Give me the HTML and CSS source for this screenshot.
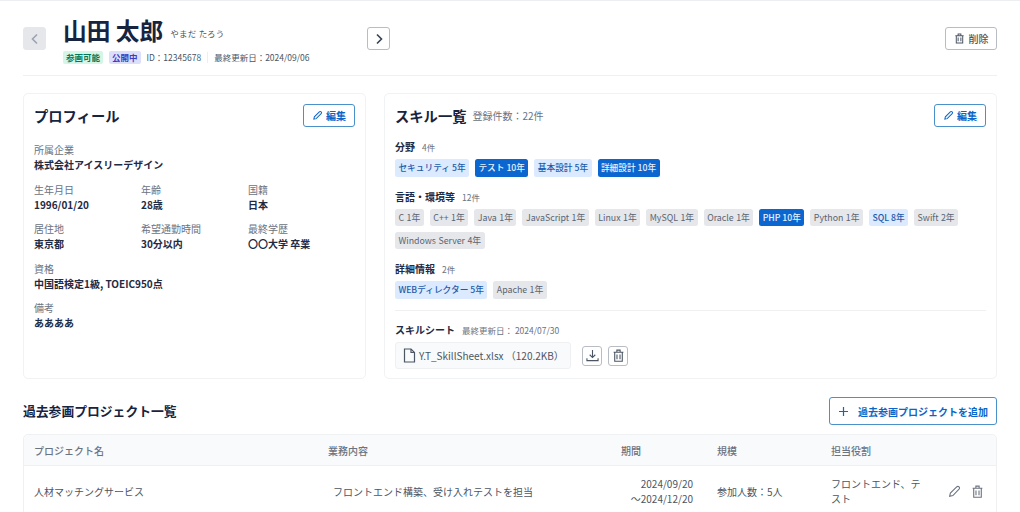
FILE: index.html
```html
<!DOCTYPE html>
<html lang="ja">
<head>
<meta charset="utf-8">
<title>山田 太郎</title>
<link rel="stylesheet" href="styles.css">
</head>
<body>
<div class="page">
  <header class="header">
    <button class="nav nav-disabled"><svg width="12" height="12" viewBox="0 0 12 12" fill="none" stroke="#9ca3af" stroke-width="1.6"><path d="M8 1.5 3.5 6 8 10.5"/></svg></button>
    <div class="identity">
      <div class="name-row"><h1>山田 太郎</h1><span class="kana">やまだ たろう</span></div>
      <div class="meta-row">
        <span class="status status-green">参画可能</span>
        <span class="status status-purple">公開中</span>
        <span class="meta">ID：12345678</span>
        <span class="meta-sep"></span>
        <span class="meta">最終更新日：2024/09/06</span>
      </div>
    </div>
    <button class="nav nav-next"><svg width="12" height="12" viewBox="0 0 12 12" fill="none" stroke="#374151" stroke-width="1.6"><path d="M4 1.5 8.5 6 4 10.5"/></svg></button>
    <button class="btn-delete"><svg width="11" height="11" viewBox="0 0 12 12" fill="none" stroke="#4b5563" stroke-width="1.1"><path d="M2.5 3v8h7V3M1.5 3h9M4.5 3V1h3v2M4.5 5v4M7.5 5v4"/></svg>削除</button>
  </header>

  <div class="cards">
    <section class="card profile">
      <div class="card-head">
        <h2>プロフィール</h2>
        <button class="btn-edit"><svg width="11" height="11" viewBox="0 0 12 12" fill="none" stroke="#0b66c8" stroke-width="1.1"><path d="M2 10l.6-2.6L8 2a1.3 1.3 0 0 1 2 2L4.6 9.4 2 10z"/></svg>編集</button>
      </div>
      <div class="fields">
        <div class="field field-full"><div class="label">所属企業</div><div class="value">株式会社アイスリーデザイン</div></div>
        <div class="field"><div class="label">生年月日</div><div class="value">1996/01/20</div></div>
        <div class="field"><div class="label">年齢</div><div class="value">28歳</div></div>
        <div class="field"><div class="label">国籍</div><div class="value">日本</div></div>
        <div class="field"><div class="label">居住地</div><div class="value">東京都</div></div>
        <div class="field"><div class="label">希望通勤時間</div><div class="value">30分以内</div></div>
        <div class="field"><div class="label">最終学歴</div><div class="value">〇〇大学 卒業</div></div>
        <div class="field field-full"><div class="label">資格</div><div class="value">中国語検定1級, TOEIC950点</div></div>
        <div class="field field-full"><div class="label">備考</div><div class="value">ああああ</div></div>
      </div>
    </section>

    <section class="card skills">
      <div class="card-head">
        <div class="title-group"><h2>スキル一覧</h2><span class="count">登録件数：22件</span></div>
        <button class="btn-edit"><svg width="11" height="11" viewBox="0 0 12 12" fill="none" stroke="#0b66c8" stroke-width="1.1"><path d="M2 10l.6-2.6L8 2a1.3 1.3 0 0 1 2 2L4.6 9.4 2 10z"/></svg>編集</button>
      </div>
      <div class="skill-group">
        <div class="group-title"><strong>分野</strong><span>4件</span></div>
        <div class="tags">
          <span class="tag tag-mid">セキュリティ 5年</span><span class="tag tag-high">テスト 10年</span><span class="tag tag-mid">基本設計 5年</span><span class="tag tag-high">詳細設計 10年</span>
        </div>
      </div>
      <div class="skill-group">
        <div class="group-title"><strong>言語・環境等</strong><span>12件</span></div>
        <div class="tags">
          <span class="tag">C 1年</span><span class="tag">C++ 1年</span><span class="tag">Java 1年</span><span class="tag">JavaScript 1年</span><span class="tag">Linux 1年</span><span class="tag">MySQL 1年</span><span class="tag">Oracle 1年</span><span class="tag tag-high">PHP 10年</span><span class="tag">Python 1年</span><span class="tag tag-mid">SQL 8年</span><span class="tag">Swift 2年</span><span class="tag">Windows Server 4年</span>
        </div>
      </div>
      <div class="skill-group">
        <div class="group-title"><strong>詳細情報</strong><span>2件</span></div>
        <div class="tags">
          <span class="tag tag-mid">WEBディレクター 5年</span><span class="tag">Apache 1年</span>
        </div>
      </div>
      <div class="sheet">
        <div class="group-title"><strong>スキルシート</strong><span>最終更新日： 2024/07/30</span></div>
        <div class="sheet-row">
          <div class="file"><svg width="13" height="15" viewBox="0 0 13 15" fill="none" stroke="#4b5563" stroke-width="1.2"><path d="M1.5 1h6.5l3.5 3.5V14h-10z"/><path d="M8 1v3.5h3.5"/></svg>Y.T_SkillSheet.xlsx （120.2KB）</div>
          <button class="icon-btn"><svg width="13" height="13" viewBox="0 0 14 14" fill="none" stroke="#4b5563" stroke-width="1.2"><path d="M7 1v8M4 6.2 7 9.2l3-3M1 10v2.500h12V10"/></svg></button>
          <button class="icon-btn"><svg width="13" height="13" viewBox="0 0 12 12" fill="none" stroke="#4b5563" stroke-width="1"><path d="M2.500 3v8.300h7V3M1.500 3h9M4.500 3V1h3v2M4.600 5v4.400M7.400 5v4.400"/></svg></button>
        </div>
      </div>
    </section>
  </div>

  <div class="section-head">
    <h3>過去参画プロジェクト一覧</h3>
    <button class="btn-add"><svg width="11" height="11" viewBox="0 0 11 11" fill="none" stroke="#0b66c8" stroke-width="1.2"><path d="M5.500 1v9M1 5.500h9"/></svg>過去参画プロジェクトを追加</button>
  </div>

  <div class="table">
    <div class="row row-head">
      <div class="c-name">プロジェクト名</div>
      <div class="c-work">業務内容</div>
      <div class="c-period">期間</div>
      <div class="c-scale">規模</div>
      <div class="c-role">担当役割</div>
    </div>
    <div class="row row-body">
      <div class="c-name">人材マッチングサービス</div>
      <div class="c-work c-work-body">フロントエンド構築、受け入れテストを担当</div>
      <div class="c-period c-period-body">2024/09/20<br>～2024/12/20</div>
      <div class="c-scale">参加人数：5人</div>
      <div class="c-role">フロントエンド、テスト</div>
      <div class="c-actions">
        <svg width="13" height="13" viewBox="0 0 12 12" fill="none" stroke="#6b7280" stroke-width="1"><path d="M1.500 10.500l.7-3L8 1.700a1.400 1.400 0 0 1 2.200 2.200L4.500 9.800z"/></svg>
        <svg width="13" height="13" viewBox="0 0 12 12" fill="none" stroke="#6b7280" stroke-width="1"><path d="M2.500 3v8.300h7V3M1.500 3h9M4.500 3V1h3v2M4.600 5v4.400M7.400 5v4.400"/></svg>
      </div>
    </div>
  </div>
</div>
</body>
</html>
```
FILE: styles.css
```css
* { box-sizing: border-box; }
html, body { margin: 0; height: 512px; overflow: hidden; background: #fff; }
body {
  font-family: "Noto Sans CJK JP", "Noto Sans", sans-serif;
  color: #1f2a44;
  font-size: 10px;
  border-top: 1px solid #eceef1;
}
button { font-family: inherit; cursor: pointer; background: #fff; padding: 0; }
svg { flex: none; display: block; }
h1, h2, h3 { margin: 0; color: #17243f; }
.page { padding: 0 23px; }

.header {
  display: flex;
  align-items: flex-start;
  height: 75px;
  border-bottom: 1px solid #eff0f2;
}
.nav {
  width: 23px;
  height: 23px;
  margin-top: 26px;
  border-radius: 3px;
  display: flex;
  align-items: center;
  justify-content: center;
  border: 1px solid #b8bcc3;
}
.nav-disabled { background: #e5e7eb; border-color: #e5e7eb; }
.identity { margin-left: 17px; width: 304px; padding-top: 15px; }
.name-row { display: flex; align-items: flex-end; height: 29px; }
h1 { font-size: 23.700px; line-height: 29px; font-weight: 700; }
.kana { font-size: 8.500px; line-height: 15px; margin-left: 7px; margin-bottom: 4px; color: #4b5563; letter-spacing: .3px; }
.meta-row { display: flex; align-items: center; margin-top: 5px; height: 14px; }
.status { font-size: 8.500px; font-weight: 600; line-height: 13px; padding: 0 3px; border-radius: 2px; margin-right: 6px; }
.status-green { background: #d5f5e6; color: #047857; }
.status-purple { background: #dcdffb; color: #3f3cc0; }
.meta { font-size: 8.500px; color: #4b5563; }
.meta-sep { width: 1px; height: 11px; background: #eceef1; margin: 0 6px; }
.btn-delete {
  margin: 26px 0 0 auto;
  width: 52px;
  height: 23px;
  border: 1px solid #b8bcc3;
  border-radius: 3px;
  display: flex;
  align-items: center;
  justify-content: center;
  gap: 4px;
  font-size: 10px;
  font-weight: 500;
  color: #4b5563;
}

.cards { display: flex; gap: 18px; margin-top: 17px; height: 286px; }
.card { border: 1px solid #f1f2f4; border-radius: 5px; padding: 10px; }
.profile { width: 343px; }
.skills { flex: 1; min-width: 0; }
.card-head { display: flex; justify-content: space-between; align-items: center; height: 23px; }
h2 { font-size: 14.300px; font-weight: 700; line-height: 23px; }
.title-group { display: flex; align-items: center; gap: 6px; }
.count { font-size: 10px; color: #6b7280; }
.btn-edit {
  width: 52px;
  height: 23px;
  border: 1px solid #4a90c9;
  border-radius: 3px;
  display: flex;
  align-items: center;
  justify-content: center;
  gap: 3px;
  font-size: 10px;
  font-weight: 600;
  color: #0b66c8;
}

.fields { display: grid; grid-template-columns: 107px 107px 1fr; row-gap: 9.500px; margin-top: 15px; }
.field-full { grid-column: 1 / -1; }
.label { font-size: 10px; line-height: 15px; color: #6b7280; }
.value { font-size: 10px; line-height: 15px; font-weight: 700; color: #1f2a44; }

.skill-group { margin-top: 12px; }
.group-title { display: flex; align-items: baseline; gap: 7px; height: 15px; line-height: 15px; }
.group-title strong { font-size: 10px; font-weight: 700; color: #1f2a44; }
.group-title span { font-size: 8.500px; color: #6b7280; }
.tags { display: flex; flex-wrap: wrap; gap: 5.500px 6px; margin-top: 5px; }
.tag { font-size: 8.800px; line-height: 17.500px; height: 17.500px; padding: 0 3.500px; border-radius: 2.500px; background: #e5e7eb; color: #5b6472; font-weight: 400; white-space: nowrap; word-spacing: .5px; }
.tag-mid, .tag-high { font-size: 8.700px; padding: 0 3.400px; font-weight: 500; word-spacing: 0; }
.tag-mid { background: #dbeafe; color: #1e5aa8; }
.tag-high { background: #0b66d0; color: #e8f1fd; }

.sheet { margin-top: 11.500px; border-top: 1px solid #eff0f2; padding-top: 11px; }
.sheet-row { display: flex; align-items: center; margin-top: 5px; }
.file {
  width: 176px;
  height: 27px;
  background: #f9fafb;
  border: 1px solid #eff0f2;
  border-radius: 3px;
  padding-left: 7px;
  display: flex;
  align-items: center;
  gap: 3px;
  font-size: 10px;
  color: #4b5563;
  margin-right: 11px;
}
.icon-btn {
  width: 20px;
  height: 20px;
  border: 1px solid #b8bcc3;
  border-radius: 3px;
  display: flex;
  align-items: center;
  justify-content: center;
  margin-right: 6px;
}

.section-head { display: flex; justify-content: space-between; align-items: center; margin-top: 18px; height: 28px; }
h3 { font-size: 12.800px; font-weight: 700; line-height: 28px; }
.btn-add {
  width: 168px;
  height: 28px;
  border: 1px solid #4a90c9;
  border-radius: 3px;
  display: flex;
  align-items: center;
  justify-content: center;
  gap: 9px;
  font-size: 10px;
  font-weight: 600;
  color: #0b66c8;
}

.table { margin-top: 9px; border: 1px solid #eff0f2; border-radius: 5px 5px 0 0; height: 90px; }
.row { display: flex; align-items: center; font-size: 10px; color: #4b5563; padding-left: 10px; }
.row-head { height: 31px; background: #f9fafb; border-bottom: 1px solid #eff0f2; color: #6b7280; font-weight: 500; border-radius: 5px 5px 0 0; }
.row-body { height: 50px; line-height: 15px; }
.c-name { width: 294px; flex: none; }
.c-work { width: 293px; flex: none; }
.c-work-body { padding-left: 5px; }
.c-period { width: 96px; flex: none; }
.c-period-body { width: 72px; text-align: right; margin-right: 24px; }
.c-scale { width: 114px; flex: none; }
.c-role { width: 96px; flex: none; }
.c-actions { display: flex; gap: 10px; margin-left: 21px; }
```
